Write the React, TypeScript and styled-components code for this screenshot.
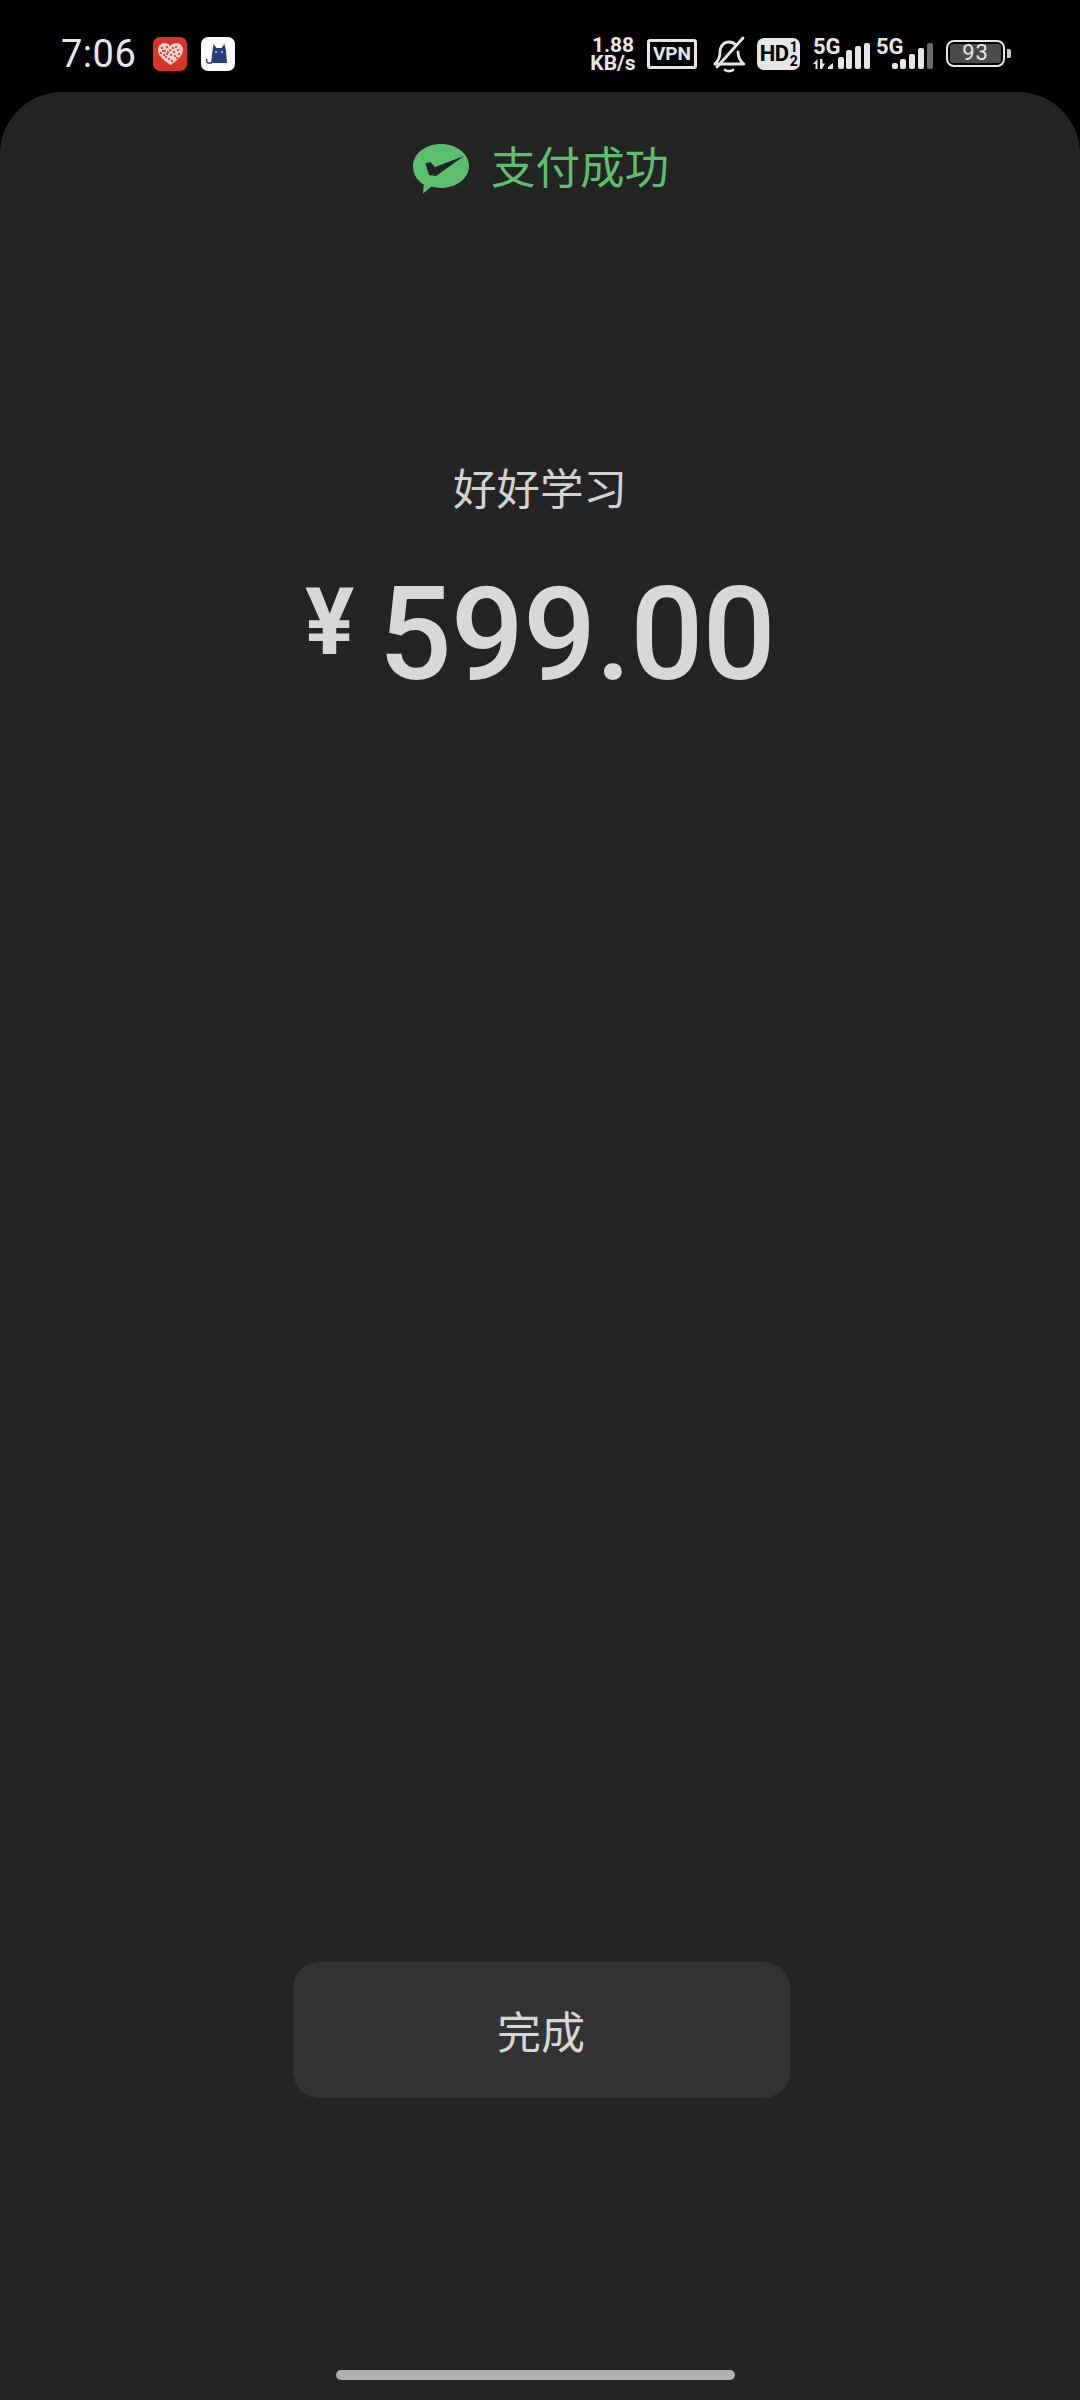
import styled, { createGlobalStyle } from 'styled-components';

const GlobalStyle = createGlobalStyle`
  html, body {
    margin: 0;
    padding: 0;
    background: #000;
  }
  * {
    box-sizing: border-box;
  }
`;

const Screen = styled.div`
  width: 1080px;
  height: 2400px;
  display: flex;
  flex-direction: column;
  background: #000;
  font-family: Roboto, "Noto Sans CJK SC", sans-serif;
  overflow: hidden;
`;

const StatusBar = styled.div`
  height: 92px;
  flex-shrink: 0;
  display: flex;
  align-items: center;
  justify-content: space-between;
  padding: 0 69px 0 61px;
  color: #f0f0f0;
`;

const StatusLeft = styled.div`
  display: flex;
  align-items: center;
  gap: 14px;
  margin-top: 16px;
`;

const Time = styled.span`
  font-size: 38px;
  line-height: 40px;
  letter-spacing: 0.5px;
  width: 78px;
  color: #e8e8e8;
`;

const AppIcon = styled.svg`
  width: 34px;
  height: 34px;
  display: block;
`;

const StatusRight = styled.div`
  display: flex;
  align-items: center;
  margin-top: 15px;
`;

const NetSpeed = styled.div`
  width: 48px;
  margin-right: 10px;
  font-size: 21px;
  line-height: 18px;
  font-weight: 700;
  text-align: center;
  white-space: nowrap;
  color: #e6e6e6;
`;

const VpnBadge = styled.div`
  width: 50px;
  height: 30px;
  border: 3px solid #e6e6e6;
  border-radius: 3px;
  font-size: 19px;
  line-height: 24px;
  font-weight: 700;
  text-align: center;
  margin-right: 15px;
  color: #e6e6e6;
`;

const BellIcon = styled.svg`
  width: 34px;
  height: 38px;
  display: block;
  margin-right: 11px;
`;

const HdBadge = styled.div`
  width: 43px;
  height: 32px;
  background: #e6e6e6;
  border-radius: 7px;
  color: #000;
  display: flex;
  align-items: center;
  justify-content: center;
  font-size: 22px;
  font-weight: 700;
  letter-spacing: -0.5px;
  margin-right: 13px;
`;

const HdStack = styled.span`
  display: flex;
  flex-direction: column;
  font-size: 14px;
  line-height: 14px;
  margin-left: 1px;
`;

const SignalGroup = styled.div`
  position: relative;
  width: 57px;
  height: 30px;
  margin-right: 6px;
`;

const FiveG = styled.span`
  position: absolute;
  left: 0;
  top: -3px;
  font-size: 22px;
  line-height: 22px;
  font-weight: 700;
  color: #e6e6e6;
`;

const SignalIcon = styled.svg`
  position: absolute;
  left: 0;
  bottom: 0;
  display: block;
`;

const Battery = styled.div`
  display: flex;
  align-items: center;
  gap: 2px;
  margin-left: 7px;
`;

const BatteryBody = styled.div`
  width: 59px;
  height: 27px;
  border: 2.5px solid #e6e6e6;
  border-radius: 8px;
  padding: 2px;
`;

const BatteryFill = styled.div`
  height: 100%;
  background: #4a4a4a;
  border-radius: 3px;
  color: #e6e6e6;
  font-size: 22px;
  line-height: 18px;
  text-align: center;
  letter-spacing: 1px;
`;

const BatteryNub = styled.div`
  width: 4px;
  height: 9px;
  background: #ccc;
  border-radius: 0 2px 2px 0;
`;

const Sheet = styled.main`
  flex: 1;
  display: flex;
  flex-direction: column;
  align-items: center;
  background: #242424;
  border-radius: 62px 62px 0 0;
`;

const ResultRow = styled.div`
  display: flex;
  align-items: center;
  gap: 22px;
  margin-top: 51px;
  margin-left: 2px;
  height: 52px;
`;

const WechatIcon = styled.svg`
  width: 56px;
  height: 50px;
  display: block;
`;

const ResultText = styled.span`
  font-size: 44.5px;
  line-height: 52px;
  color: #5cbf6e;
`;

const Merchant = styled.div`
  margin-top: 268px;
  font-size: 43.5px;
  line-height: 56px;
  color: #d2d2d2;
`;

const Amount = styled.div`
  display: flex;
  align-items: flex-start;
  margin-top: 56px;
  height: 120px;
  color: #d8d8d8;
`;

const Currency = styled.span`
  font-size: 92px;
  line-height: 88px;
  font-weight: 700;
  margin-right: 24px;
  margin-top: 4px;
`;

const Value = styled.span`
  font-size: 129px;
  line-height: 120px;
  font-weight: 500;
  letter-spacing: -1px;
`;

const DoneButton = styled.button`
  width: 497px;
  height: 136px;
  margin-top: auto;
  margin-left: 2px;
  border: 0;
  border-radius: 26px;
  background: #333333;
  color: #d6d6d6;
  font-family: inherit;
  font-size: 44px;
`;

const HomeBar = styled.div`
  width: 399px;
  height: 10px;
  margin-top: 272px;
  margin-bottom: 20px;
  margin-right: 9px;
  border-radius: 5px;
  background: #b0b0b0;
`;

// the dots that break up the heart on the red badge
const heartDots = [
  [9, 11], [12, 14], [14, 10], [8, 16], [11, 18], [15, 15], [13, 20], [17, 13], [18, 18], [16, 22],
  [20, 11], [21, 15], [23, 10], [25, 13], [26, 17], [22, 19], [24, 21], [19, 24], [14, 17], [10, 14],
];

const txBars = [
  { x: 25, h: 12 },
  { x: 33, h: 19 },
  { x: 42, h: 23 },
  { x: 51, h: 26 },
];

const plainBars = [
  { x: 16, h: 6 },
  { x: 24, h: 10 },
  { x: 33, h: 15 },
  { x: 42, h: 21 },
  { x: 51, h: 26, dim: true },
];

function Signal({ tx }: { tx?: boolean }) {
  const bars: { x: number; h: number; dim?: boolean }[] = tx ? txBars : plainBars;
  return (
    <SignalIcon width="57" height="26" viewBox="0 0 57 26">
      {tx && (
        <g fill="#e6e6e6">
          <path d="M0 21l4.500-5v10h-2v-5z" />
          <path d="M7 16h2.500v4.500H12L9 26H7z" />
          <path d="M15 24l5-4v6h-5z" />
        </g>
      )}
      {bars.map(bar => (
        <rect
          key={bar.x}
          x={bar.x}
          y={26 - bar.h}
          width="6"
          height={bar.h}
          rx="2"
          fill={bar.dim ? '#6a6a6a' : '#e6e6e6'}
        />
      ))}
    </SignalIcon>
  );
}

export default function App() {
  return (
    <Screen>
      <GlobalStyle />
      <StatusBar>
        <StatusLeft>
          <Time>7:06</Time>
          <AppIcon viewBox="0 0 34 34">
            <rect width="34" height="34" rx="7" fill="#dc3328" />
            <path d="M17.500 28C10 23 5 18 5 12.500 5 9 8 6 11.500 6c2.500 0 4.800 1.200 6 3.200C18.700 7.200 21 6 23.500 6 27 6 30 9 30 12.500 30 18 25 23 17.500 28z" fill="#f4d2ce" />
            {heartDots.map(([x, y]) => (
              <circle key={`${x}-${y}`} cx={x} cy={y} r="1.100" fill="#d9352b" />
            ))}
          </AppIcon>
          <AppIcon viewBox="0 0 34 34">
            <rect width="34" height="34" rx="7" fill="#fdfdfd" />
            <path d="M12.500 7l3 4h5l3-4 1.500 7 1 12H10l1.500-12z" fill="#263d78" />
            <path d="M11 26H7.500c-2 0-2.500-2.500-1.500-4" fill="none" stroke="#263d78" strokeWidth="1.500" />
            <circle cx="15" cy="15" r="0.900" fill="#cfd6ea" />
            <circle cx="21" cy="15" r="0.900" fill="#cfd6ea" />
          </AppIcon>
        </StatusLeft>
        <StatusRight>
          <NetSpeed>
            1.88
            <br />
            KB/s
          </NetSpeed>
          <VpnBadge>VPN</VpnBadge>
          <BellIcon viewBox="0 0 34 38" fill="none" stroke="#e6e6e6" strokeWidth="2.800" strokeLinecap="round" strokeLinejoin="round">
            <path d="M3 29c3-3 5-6 5-12 0-6 4-10 9-10 3 0 5 1 7 3" />
            <path d="M26 17c0 6 2 9 6 12H3" />
            <path d="M5 32L31 3" />
            <path d="M13 35c2 1.500 6 1.500 8 0" />
          </BellIcon>
          <HdBadge>
            HD
            <HdStack>
              <span>1</span>
              <span>2</span>
            </HdStack>
          </HdBadge>
          <SignalGroup>
            <FiveG>5G</FiveG>
            <Signal tx />
          </SignalGroup>
          <SignalGroup>
            <FiveG>5G</FiveG>
            <Signal />
          </SignalGroup>
          <Battery>
            <BatteryBody>
              <BatteryFill>93</BatteryFill>
            </BatteryBody>
            <BatteryNub />
          </Battery>
        </StatusRight>
      </StatusBar>
      <Sheet>
        <ResultRow>
          <WechatIcon viewBox="0 0 56 50">
            <path d="M28 0c15 0 28 9.500 28 22S43 44 28 44c-3.500 0-6.500-.5-9.500-1.400L10 49.500l.8-9C4 36.500 0 29.800 0 22 0 9.500 13 0 28 0z" fill="#5cbf6e" />
            <path d="M12.500 19.500l5-1.500 4.500 5L51 12 23 32l-7-1z" fill="#242424" />
          </WechatIcon>
          <ResultText>支付成功</ResultText>
        </ResultRow>
        <Merchant>好好学习</Merchant>
        <Amount>
          <Currency>¥</Currency>
          <Value>599.00</Value>
        </Amount>
        <DoneButton>完成</DoneButton>
        <HomeBar />
      </Sheet>
    </Screen>
  );
}
